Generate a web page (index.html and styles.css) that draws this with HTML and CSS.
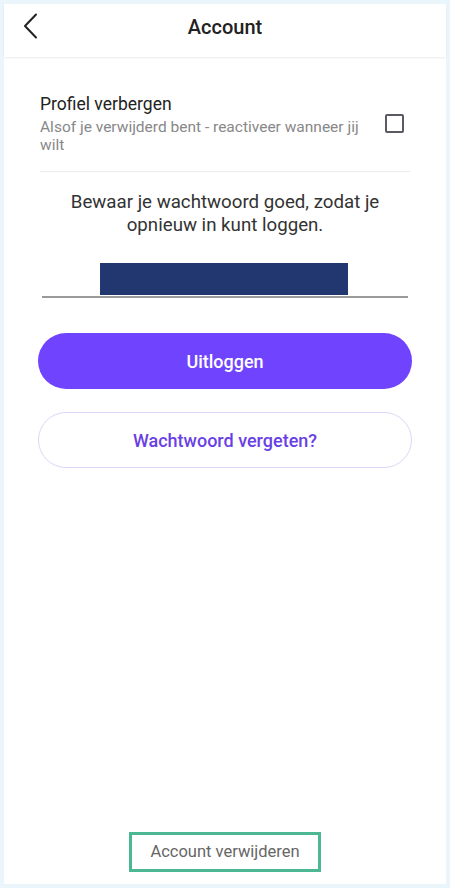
FILE: index.html
```html
<!DOCTYPE html>
<html lang="nl">
  <head>
    <meta charset="UTF-8" />
    <meta name="viewport" content="width=device-width, initial-scale=1.0" />
    <title>Account</title>
    <link rel="stylesheet" href="styles.css">
  </head>
  <body>
    <div class="screen">
      <header class="topbar">
        <span class="back">
          <svg width="16" height="26" viewBox="0 0 16 26">
            <path d="M13 1.5 L2 13 L13 24.5" fill="none" stroke="#222" stroke-width="2" stroke-linecap="round" stroke-linejoin="round"/>
          </svg>
        </span>
        <h1 class="title">Account</h1>
      </header>

      <main class="content">
        <div class="row">
          <div class="row-text">
            <div class="row-title">Profiel verbergen</div>
            <div class="row-sub">Alsof je verwijderd bent - reactiveer wanneer jij wilt</div>
          </div>
          <span class="checkbox"></span>
        </div>

        <p class="note">Bewaar je wachtwoord goed, zodat je opnieuw in kunt loggen.</p>

        <div class="password">
          <span class="mask"></span>
        </div>

        <button class="btn btn-primary">Uitloggen</button>
        <button class="btn btn-outline">Wachtwoord vergeten?</button>
      </main>

      <footer class="bottom">
        <span class="delete">Account verwijderen</span>
      </footer>
    </div>
  </body>
</html>
```

FILE: styles.css
```css
* {
  box-sizing: border-box;
  margin: 0;
  padding: 0;
}
body {
  background: #eaf5fc;
  font-family: Roboto, "Liberation Sans", sans-serif;
  color: #222;
}
.screen {
  margin: 4px;
  height: 880px;
  background: #fff;
  display: flex;
  flex-direction: column;
}

/* top bar */
.topbar {
  height: 53px;
  display: flex;
  align-items: flex-start;
  justify-content: center;
  position: relative;
  box-shadow: 0 1px 2px rgba(0, 0, 0, 0.08);
}
.back {
  position: absolute;
  left: 19px;
  top: 9px;
  display: flex;
}
.title {
  font-size: 20px;
  line-height: 26px;
  font-weight: 500;
  color: #222;
  padding-top: 10px;
}

/* content */
.content {
  flex: 1;
  padding: 0 34px;
  display: flex;
  flex-direction: column;
}
.row {
  margin: 36px 2px 0 2px;
  padding-bottom: 17px;
  border-bottom: 1px solid #ececec;
  display: flex;
  align-items: center;
  gap: 16px;
}
.row-text {
  flex: 1;
}
.row-title {
  font-size: 17.5px;
  line-height: 22px;
  color: #222;
}
.row-sub {
  font-size: 15.5px;
  line-height: 18px;
  color: #888;
  margin-top: 3px;
}
.checkbox {
  width: 19px;
  height: 19px;
  border: 2px solid #5a5a62;
  border-radius: 2px;
  margin-right: 6px;
  margin-top: -1px;
}

.note {
  margin: 19px 14px 0 14px;
  text-align: center;
  font-size: 18.7px;
  line-height: 23px;
  color: #333;
}

.password {
  margin: 25px 4px 0 4px;
  height: 36px;
  border-bottom: 2px solid #9a9a9a;
  display: flex;
  justify-content: center;
  align-items: flex-end;
}
.mask {
  width: 248px;
  height: 32px;
  background: #223670;
  margin-right: 3px;
  margin-bottom: 1px;
}

.btn {
  height: 56px;
  border-radius: 28px;
  font-family: inherit;
  font-size: 18px;
  font-weight: 500;
  cursor: pointer;
}
.btn-primary {
  margin-top: 35px;
  background: #7044ff;
  border: none;
  color: #fff;
}
.btn-outline {
  margin-top: 23px;
  background: #fff;
  border: 1px solid #dcd6f7;
  color: #6a3fe4;
}

/* bottom link */
.bottom {
  display: flex;
  justify-content: center;
  padding-bottom: 12px;
}
.delete {
  border: 3px solid #4cb893;
  padding: 7px 18px 8px 18px;
  font-size: 16.5px;
  color: #666;
}
```
